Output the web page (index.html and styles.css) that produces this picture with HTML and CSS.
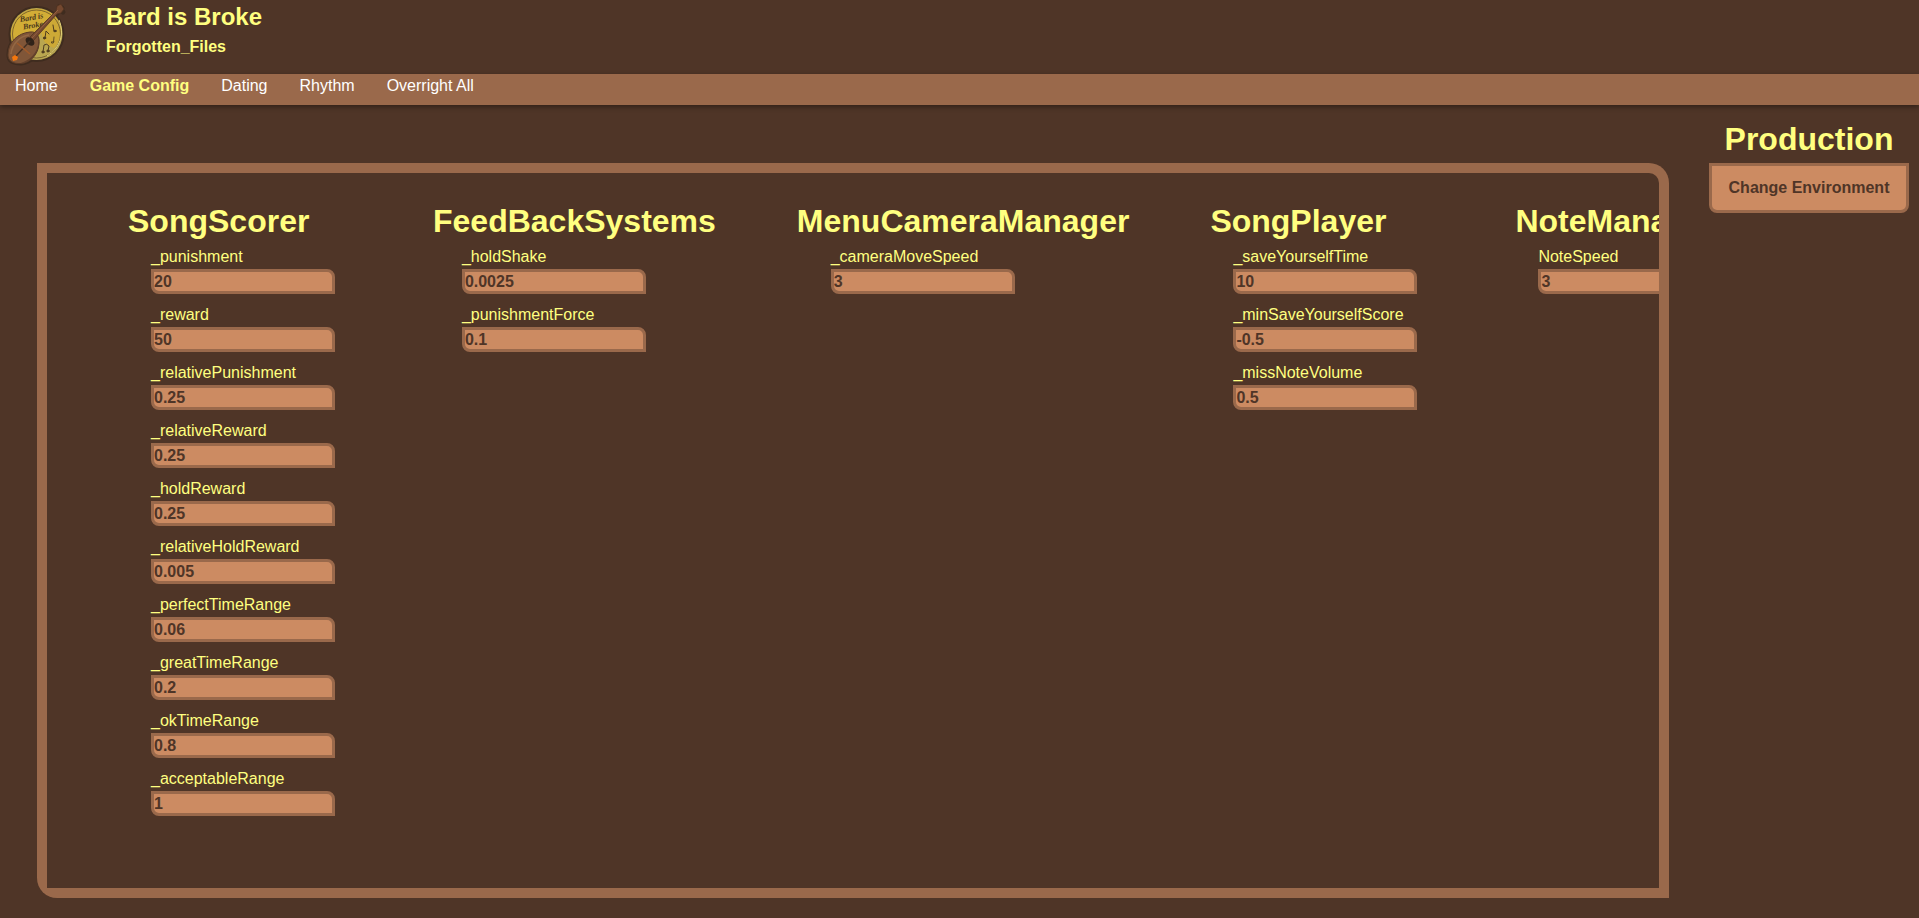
FILE: index.html
```html
<!DOCTYPE html>
<html lang="en">
<head>
<meta charset="utf-8">
<meta name="viewport" content="width=device-width, initial-scale=1">
<title>Bard is Broke - Game Config</title>
<link rel="stylesheet" href="styles.css">
</head>
<body>
<header class="header">
  <svg class="logo" viewBox="0 0 70 70" role="img" aria-label="Bard is Broke logo">
    <g fill="none" stroke="#3f2c1f" stroke-width="5" stroke-linejoin="round" stroke-linecap="round">
      <circle cx="36.500" cy="34" r="25.500"/>
      <path d="M36 35L62 8M59 7l4 5M9 55C9 42 19 33 31 32c6 0 9 5 8 12-1 11-9 18-18 19-7 0-12-2-12-8z"/>
    </g>
    <circle cx="36.500" cy="34" r="26" fill="#b9a650"/>
    <path d="M11 34a26 26 0 0 1 44-18L24 55C15 50 11 42 11 34z" fill="#d2ad36"/>
    <path d="M55 16c9 12 7 24-1 32-9-3-13-9-12-18z" fill="#cda936"/>
    <circle cx="36.500" cy="34" r="24" fill="none" stroke="#675329" stroke-width=".8"/>
    <path d="M59 20c6 14 1 28-12 36" fill="none" stroke="#e2d177" stroke-width="1"/>
    <g class="logo-text" transform="rotate(-10 32 20)">
      <text x="20" y="20">Bard is</text>
      <text x="22" y="28">Broke</text>
    </g>
    <g fill="#4f3d20" stroke="#4f3d20" stroke-width="1" stroke-linecap="round">
      <path d="M45 38l1-7 3 3M54 31l-1-6M43 52l1-7q3-2 5 1l-1 5" fill="none"/>
      <ellipse cx="44.500" cy="38" rx="1.200" ry="1"/>
      <ellipse cx="55" cy="31" rx="1.200" ry=".8"/>
      <ellipse cx="43" cy="52" rx="1.200" ry="1"/>
      <ellipse cx="48" cy="51" rx="1.200" ry="1"/>
      <path d="M54 37l-.5 5q-3-1-2 1 2 1 2.500-1" fill="none" stroke-width=".8"/>
    </g>
    <path d="M8 55C8 42 18 33 30 32c7-1 10 5 9 12-1 11-9 19-18 19.500C13 64 8 61 8 55z" fill="#805638" stroke="#5a3a27" stroke-width="1"/>
    <path d="M38 37c2 12-5 22-17 26 9 0 17-8 18-19 .3-3 0-5-1-7z" fill="#63412c"/>
    <path d="M11 54c1-10 9-18 18-19" fill="none" stroke="#946844" stroke-width="1.500"/>
    <path d="M30 37L56 11l1-5 4-2 3 5-3 4-4 1-24 27z" fill="#74482f" stroke="#523321" stroke-width=".8"/>
    <path d="M32 38l26-28" fill="none" stroke="#966242" stroke-width="1"/>
    <ellipse cx="30" cy="41.500" rx="5" ry="3.500" transform="rotate(40 30 41.500)" fill="#302319"/>
    <path d="M15 57l15-16" stroke="#443023" stroke-width="1.500"/>
    <path d="M17 43l13 11" stroke="#a25b29" stroke-width="1.500"/>
    <path d="M12 57l3-2 3 2-1 3-4 1z" fill="#f4770d"/>
  </svg>
  <div class="titles">
    <h1 class="title">Bard is Broke</h1>
    <p class="subtitle">Forgotten_Files</p>
  </div>
</header>
<nav class="nav">
  <a href="#home">Home</a>
  <a href="#config" class="active" aria-current="page">Game Config</a>
  <a href="#dating">Dating</a>
  <a href="#rhythm">Rhythm</a>
  <a href="#overright">Overright All</a>
</nav>
<main class="main">
  <div class="frame">
    <form class="panel">
      <section class="group">
        <h2>SongScorer</h2>
        <div class="fields">
          <label>_punishment<input type="text" value="20"></label>
          <label>_reward<input type="text" value="50"></label>
          <label>_relativePunishment<input type="text" value="0.25"></label>
          <label>_relativeReward<input type="text" value="0.25"></label>
          <label>_holdReward<input type="text" value="0.25"></label>
          <label>_relativeHoldReward<input type="text" value="0.005"></label>
          <label>_perfectTimeRange<input type="text" value="0.06"></label>
          <label>_greatTimeRange<input type="text" value="0.2"></label>
          <label>_okTimeRange<input type="text" value="0.8"></label>
          <label>_acceptableRange<input type="text" value="1"></label>
        </div>
      </section>
      <section class="group">
        <h2>FeedBackSystems</h2>
        <div class="fields">
          <label>_holdShake<input type="text" value="0.0025"></label>
          <label>_punishmentForce<input type="text" value="0.1"></label>
        </div>
      </section>
      <section class="group">
        <h2>MenuCameraManager</h2>
        <div class="fields">
          <label>_cameraMoveSpeed<input type="text" value="3"></label>
        </div>
      </section>
      <section class="group">
        <h2>SongPlayer</h2>
        <div class="fields">
          <label>_saveYourselfTime<input type="text" value="10"></label>
          <label>_minSaveYourselfScore<input type="text" value="-0.5"></label>
          <label>_missNoteVolume<input type="text" value="0.5"></label>
        </div>
      </section>
      <section class="group">
        <h2>NoteManager</h2>
        <div class="fields">
          <label>NoteSpeed<input type="text" value="3"></label>
        </div>
      </section>
    </form>
  </div>
  <aside class="environment">
    <h2>Production</h2>
    <button type="button">Change Environment</button>
  </aside>
</main>
</body>
</html>
```

FILE: styles.css
```css
:root {
  --dark: #4f3527;
  --bar: #9a694b;
  --field: #cc8b62;
  --light: #ffff80;
}

* {
  box-sizing: border-box;
}

body {
  margin: 0;
  min-height: 100vh;
  display: flex;
  flex-direction: column;
  background: var(--dark);
  color: var(--light);
  font: 16px/18px "Liberation Sans", Arial, sans-serif;
}

h1, h2, p {
  margin: 0;
}

h2 {
  font-size: 32px;
  line-height: 36px;
}

.header {
  display: flex;
  gap: 36px;
  height: 74px;
}

.logo {
  width: 70px;
  height: 70px;
}

.logo-text {
  fill: #4a371b;
  font: italic bold 8px "Liberation Serif", serif;
}

.titles {
  padding-top: 3px;
}

.title {
  font-size: 24px;
  line-height: 28px;
}

.subtitle {
  margin-top: 7px;
  font-weight: bold;
}

.nav {
  display: flex;
  gap: 32px;
  height: 31px;
  padding: 3px 15px;
  background: var(--bar);
  box-shadow: 0 2px 5px rgba(0, 0, 0, 0.4);
}

.nav a {
  color: #fff;
  text-decoration: none;
}

.nav .active {
  color: var(--light);
  font-weight: bold;
}

.main {
  flex: 1;
  display: grid;
  grid-template-columns: minmax(0, 1fr) 200px;
  gap: 40px;
  padding: 0 10px 20px 37px;
}

.frame {
  display: grid;
  grid-template-columns: minmax(0, 1fr);
  margin-top: 58px;
  padding: 10px;
  border-radius: 0 20px 0 20px;
  background: var(--bar);
}

.panel {
  display: flex;
  gap: 75px;
  padding: 30px 81px;
  overflow-x: auto;
  scrollbar-width: none;
  border-radius: 0 10px 0 0;
  background: var(--dark);
}

.group {
  flex: none;
  min-width: 230px;
}

.group h2 {
  padding-right: 6px;
}

.fields {
  display: flex;
  flex-direction: column;
  gap: 12px;
  margin: 9px 0 0 10%;
}

.fields label {
  width: 184px;
}

.fields input {
  display: block;
  width: 100%;
  height: 25px;
  margin-top: 3px;
  padding: 0;
  border: 3px solid var(--bar);
  border-radius: 0 8px 0 8px;
  background: var(--field);
  color: var(--dark);
  font: bold 16px/18px "Liberation Sans", Arial, sans-serif;
}

.environment {
  padding-top: 16px;
  text-align: center;
}

.environment button {
  width: 100%;
  height: 50px;
  margin-top: 6px;
  border: 3px solid var(--bar);
  border-radius: 0 0 8px 8px;
  background: var(--field);
  color: var(--dark);
  font: bold 16px/18px "Liberation Sans", Arial, sans-serif;
}
```
